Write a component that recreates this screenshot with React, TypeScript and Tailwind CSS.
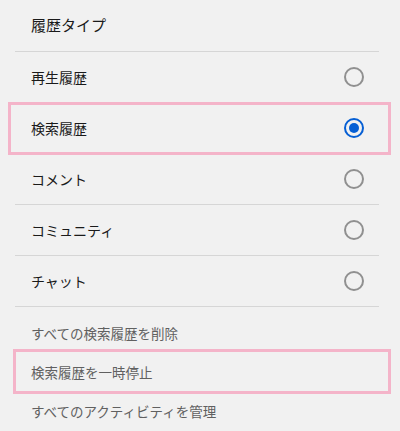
import React, { useState } from 'react';

const FONT = "font-['Noto_Sans_CJK_JP','Noto_Sans',sans-serif]";

const TYPES = ['再生履歴', '検索履歴', 'コメント', 'コミュニティ', 'チャット'];
const LINKS = ['すべての検索履歴を削除', '検索履歴を一時停止', 'すべてのアクティビティを管理'];

const Radio: React.FC<{ checked: boolean }> = ({ checked }) => (
    <span
        className={`flex h-[20px] w-[20px] items-center justify-center rounded-full border-2 ${
            checked ? 'border-[#065fd4]' : 'border-[#909090]'
        }`}
    >
        {checked && <span className="h-[10px] w-[10px] rounded-full bg-[#065fd4]" />}
    </span>
);

const App: React.FC = () => {
    const [selected, setSelected] = useState('検索履歴');

    return (
        <div className={`relative h-[431px] w-[400px] overflow-hidden bg-[#f1f1f1] ${FONT}`}>
            <div className="px-[15px] pr-[21px]">
                {/* header */}
                <div className="flex h-[52px] items-start border-b border-[#d6d6d6] pl-[16px] pt-[14px]">
                    <h2 className="text-[15px] leading-[22px] text-[#1a1a1a]">履歴タイプ</h2>
                </div>

                {/* history type options */}
                {TYPES.map(t => (
                    <label
                        key={t}
                        onClick={() => setSelected(t)}
                        className="flex h-[51px] cursor-pointer items-center justify-between border-b border-[#d6d6d6] pl-[16px] pr-[15px]"
                    >
                        <span className="text-[14px] text-[#1a1a1a]">{t}</span>
                        <Radio checked={selected === t} />
                    </label>
                ))}

                {/* actions */}
                <div className="pt-[7px]">
                    {LINKS.map(l => (
                        <div key={l} className="flex h-[39px] items-center pl-[16px] text-[13.5px] text-[#606060]">
                            {l}
                        </div>
                    ))}
                </div>
            </div>

            {/* pink highlight annotations */}
            <div className="pointer-events-none absolute left-[8px] top-[102px] h-[53px] w-[383px] border-[3px] border-[#f4b4c9]" />
            <div className="pointer-events-none absolute left-[13px] top-[349px] h-[45px] w-[378px] border-[3px] border-[#f4b4c9]" />
        </div>
    );
};

export default App;
